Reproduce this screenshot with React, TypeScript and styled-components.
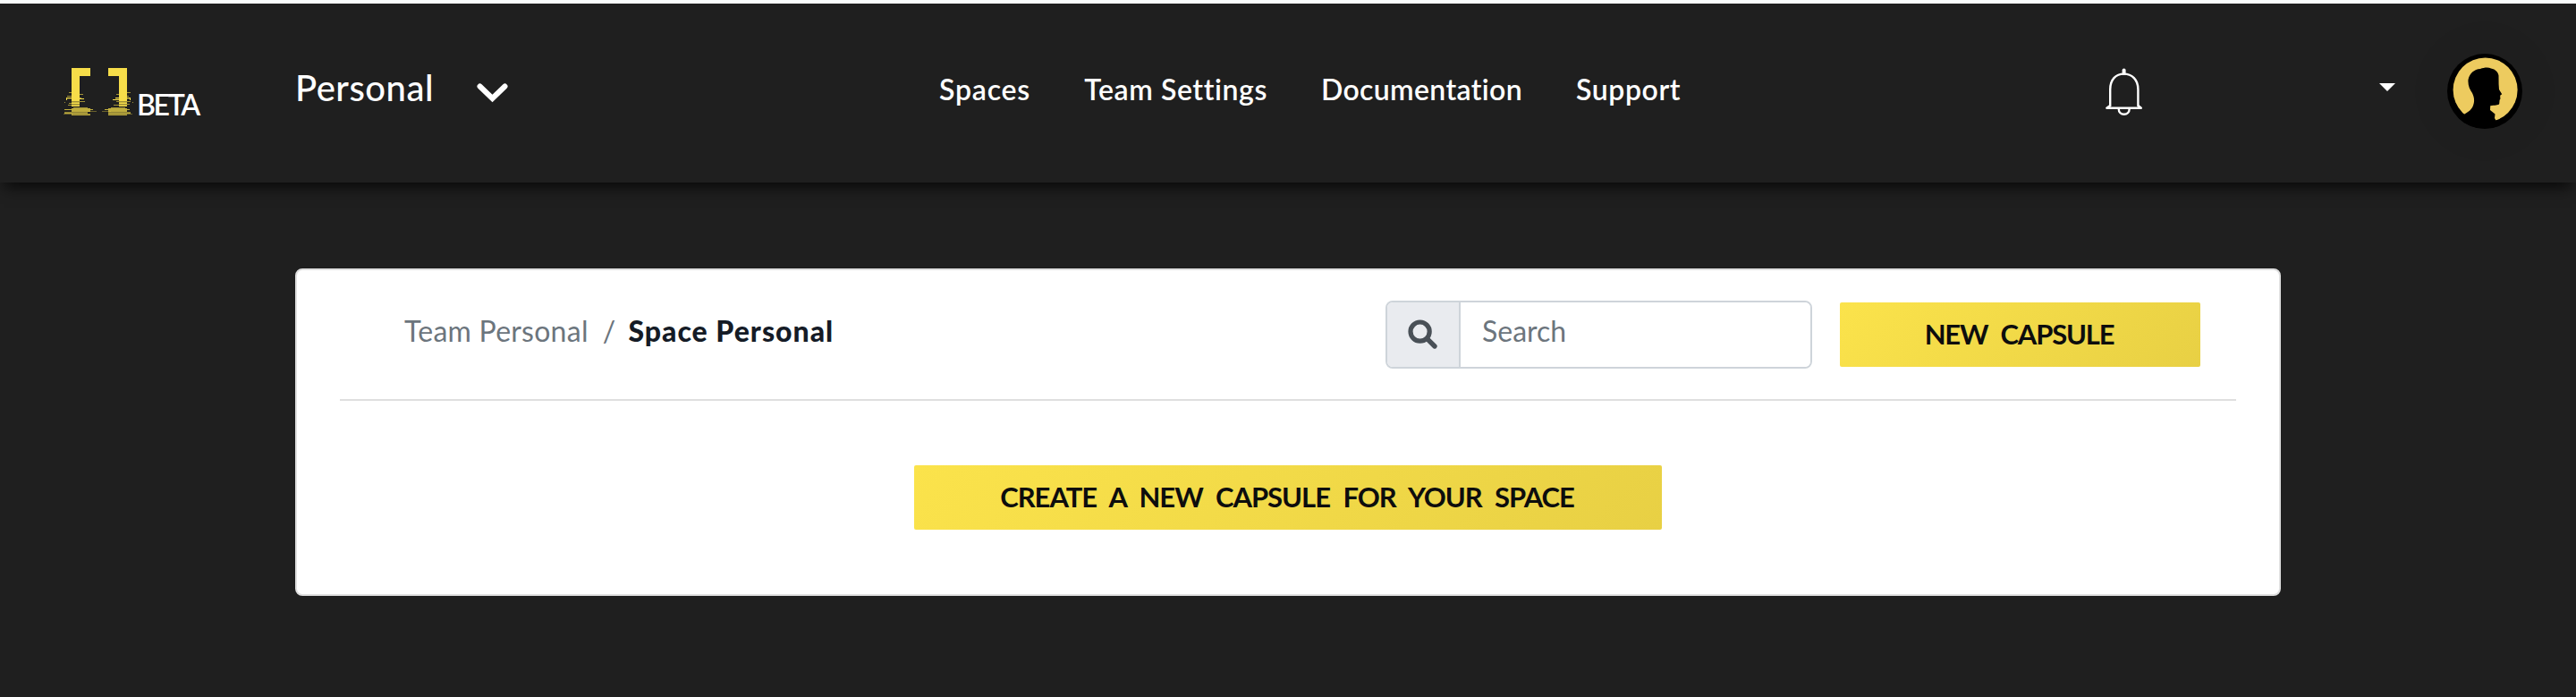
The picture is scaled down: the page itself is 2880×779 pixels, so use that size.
import React from 'react';
import styled, { createGlobalStyle } from 'styled-components';

const GlobalStyle = createGlobalStyle`
  *, *::before, *::after { box-sizing: border-box; }
  body {
    margin: 0;
    min-height: 100vh;
    background: #1f1f1f;
    font-family: Lato, "Liberation Sans", sans-serif;
    font-size: 32px;
    line-height: 38px;
  }
`;

const Header = styled.header`
  position: relative;
  display: grid;
  grid-template-columns: 330px 720px 1fr 306px 220px;
  align-items: center;
  height: 204px;
  border-top: 4px solid #fafcfc;
  padding-bottom: 4px;
  background: #1f1f1f;
  color: #fff;
  box-shadow: 0 10px 16px -5px rgba(0, 0, 0, 0.75);
`;

const Brand = styled.a`
  display: flex;
  align-items: flex-end;
  padding-left: 70px;
`;

const BrandTag = styled.span`
  margin: 0 0 -7px 4px;
  font-size: 32px;
  font-weight: 600;
  letter-spacing: -2.3px;
  line-height: 38px;
`;

const TeamPicker = styled.button`
  display: flex;
  align-items: center;
  gap: 48px;
  padding: 0 0 8px;
  border: 0;
  background: none;
  color: inherit;
  font: 500 40px/48px Lato, sans-serif;
  letter-spacing: 0.5px;

  svg { margin-top: 11px; }
`;

const Nav = styled.nav`
  display: flex;
  gap: 60px;
  padding-bottom: 5px;
`;

const NavLink = styled.a<{ $tracking: number }>`
  font-weight: 600;
  letter-spacing: ${(p) => p.$tracking}px;
`;

const AccountMenu = styled.div`
  display: flex;
  align-items: center;
`;

const Caret = styled.span`
  margin: -9px 58px 0 0;
  border: 9px solid transparent;
  border-top-color: #fff;
  border-bottom: 0;
`;

const Avatar = styled.span`
  display: flex;
  width: 84px;
  height: 84px;
  border-radius: 50%;
  overflow: hidden;
  background: #000;
  box-shadow: 0 0 4px 34px rgba(0, 0, 0, 0.02);
`;

const Card = styled.main`
  width: 2220px;
  height: 366px;
  margin: 96px auto 0;
  padding: 0 48px;
  border: 2px solid #dfdfdf;
  border-radius: 8px;
  background: #fff;
`;

const Toolbar = styled.div`
  display: flex;
  align-items: center;
  height: 146px;
  padding: 0 40px 0 72px;
  border-bottom: 2px solid #dfdfdf;
`;

const Breadcrumb = styled.div`
  display: flex;
  flex: 1;
  padding-bottom: 8px;
  color: #6c757d;
  letter-spacing: 0.25px;
`;

const Slash = styled.span`
  margin: 0 14px 0 16px;
`;

const Current = styled.span`
  color: #151b26;
  font-weight: 900;
  letter-spacing: 1px;
`;

const SearchGroup = styled.label`
  display: flex;
  width: 477px;
  height: 76px;
  margin-right: 31px;
  border: 2px solid #ced4da;
  border-radius: 8px;
  overflow: hidden;
`;

const SearchAddon = styled.span`
  display: flex;
  align-items: center;
  justify-content: center;
  width: 82px;
  border-right: 2px solid #ced4da;
  background: #e9ebef;
`;

const SearchInput = styled.input`
  flex: 1;
  min-width: 0;
  padding: 0 24px 9px;
  border: 0;
  outline: 0;
  background: #fff;
  font: 400 32px/38px Lato, sans-serif;

  &::placeholder { color: #6c757d; opacity: 1; }
`;

const ActionButton = styled.button<{ $width: number; $tracking: number; $word: number }>`
  width: ${(p) => p.$width}px;
  height: 72px;
  padding: 0 2px 3px 0;
  border: 0;
  border-radius: 2px;
  background: linear-gradient(135deg, #fbe34b 0%, #e8d044 100%);
  color: #0d0d0d;
  font: 700 31px/38px Lato, sans-serif;
  letter-spacing: ${(p) => p.$tracking}px;
  word-spacing: ${(p) => p.$word}px;
  white-space: nowrap;
`;

const EmptyState = styled.div`
  display: flex;
  justify-content: center;
  padding-top: 72px;
`;

const LogoMark = () => (
  <svg width="79" height="54" viewBox="70 75 79 54" fill="#f6dd49">
    <path d="M80 76h21v9H89v34h-9zM121 76h21v43h-9V85h-12z" />
    <g opacity=".6">
      <path d="M77 103h3v1h-3zM89 105h4v1h-4zM75 107h5v1h-5zM89 109h2v1h-2zM89 113h6v1h-6zM77 115h3v1h-3zM76 117h4v1h-4z" />
      <path d="M142 103h4v1h-4zM130 105h3v1h-3zM142 107h2v1h-2zM130 113h3v1h-3zM142 113h4v1h-4zM127 117h6v1h-6zM142 116h3v1h-3z" />
      <path d="M72 114h1v1h-1zM148 114h1v1h-1zM82 120h16v1H82zM124 120h16v1h-16z" />
    </g>
    <path d="M74 109h7v1.3h-7zM88 110h6v1h-6zM74 110h1v2h-1zM129 109h17v1.3h-17zM145 110h1v2h-1zM126 111h8v1h-8z" />
    <path opacity=".75" d="M80 121h21v4H80zM121 121h21v4h-21zM72 122h32v1H72zM117 122h28v1h-28z" />
    <path d="M72 125.5h26v1.2H72zM80 127.5h21v1.2H80zM121 125.5h25v1.2h-25zM121 127.5h21v1.2h-21z" />
    <path opacity=".35" d="M98 124h10v1H98zM114 124h10v1h-10zM71 127h10v1H71zM142 127h6v1h-6z" />
    <path fill="#1f1f1f" opacity=".8" d="M80 113.5h9v.8h-9zM80 116.5h9v.8h-9zM133 113.5h9v.8h-9zM133 116.5h9v.8h-9z" />
  </svg>
);

const ChevronIcon = () => (
  <svg width="35" height="22" viewBox="0 0 35 22" fill="none" stroke="#fff" strokeWidth="6" strokeLinecap="round">
    <path d="M3.5 3.5 17.5 17 31.5 3.5" />
  </svg>
);

const BellIcon = () => (
  <svg width="41" height="54" viewBox="0 -1 41 54" fill="none" stroke="#fff" strokeWidth="2.4">
    <path d="M5.2 43V24C5.2 13 11.5 6.6 20.5 6.6S36.4 13 36.4 24v19" />
    <path strokeWidth="4" strokeLinecap="round" d="M20.6 2.4v3.4" />
    <path d="M5.2 42 1.4 44.8h38.4L36.4 42" strokeLinejoin="round" />
    <path d="M14.7 45.500c0 4 2.700 6.300 6 6.300s6-2.300 6-6.300" />
  </svg>
);

const SearchIcon = () => (
  <svg width="34" height="34" viewBox="0 0 34 34" fill="none" stroke="#495057">
    <circle cx="13.6" cy="13.6" r="10.6" strokeWidth="5.2" />
    <path d="M21.8 21.8 30 30" strokeWidth="5.4" strokeLinecap="round" />
  </svg>
);

const Portrait = () => (
  <svg width="84" height="84" viewBox="0 0 84 84">
    <circle cx="42.6" cy="40.5" r="36" fill="#edcb5f" />
    <path d="M0 84 16 70C21 66 27 64 29 58 31 53 30 48 28 44 25 40 23 35 23.5 29 25 22 30 17.500 37 17c4-1.500 9-2 12-.5 5 1 8 4 8.500 8L57.600 34 58 40l3.200 5.300-2 1.500.2 4-.8 1-.4 4.200c-1 2-5 1.400-10 2.200L48 63l5.500 4.500L53 72l6 11z" />
  </svg>
);

const links = [
  { label: 'Spaces', tracking: 0.8 },
  { label: 'Team Settings', tracking: 0.6 },
  { label: 'Documentation', tracking: 0.35 },
  { label: 'Support', tracking: 0.6 },
];

export default function App() {
  return (
    <>
      <GlobalStyle />
      <Header>
        <Brand>
          <LogoMark />
          <BrandTag>BETA</BrandTag>
        </Brand>
        <TeamPicker>
          Personal
          <ChevronIcon />
        </TeamPicker>
        <Nav>
          {links.map((link) => (
            <NavLink key={link.label} $tracking={link.tracking}>{link.label}</NavLink>
          ))}
        </Nav>
        <BellIcon />
        <AccountMenu>
          <Caret />
          <Avatar>
            <Portrait />
          </Avatar>
        </AccountMenu>
      </Header>
      <Card>
        <Toolbar>
          <Breadcrumb>
            <span>Team Personal</span>
            <Slash>/</Slash>
            <Current>Space Personal</Current>
          </Breadcrumb>
          <SearchGroup>
            <SearchAddon>
              <SearchIcon />
            </SearchAddon>
            <SearchInput placeholder="Search" />
          </SearchGroup>
          <ActionButton $width={403} $tracking={-1.2} $word={8}>NEW CAPSULE</ActionButton>
        </Toolbar>
        <EmptyState>
          <ActionButton $width={836} $tracking={-1.03} $word={8}>CREATE A NEW CAPSULE FOR YOUR SPACE</ActionButton>
        </EmptyState>
      </Card>
    </>
  );
}
